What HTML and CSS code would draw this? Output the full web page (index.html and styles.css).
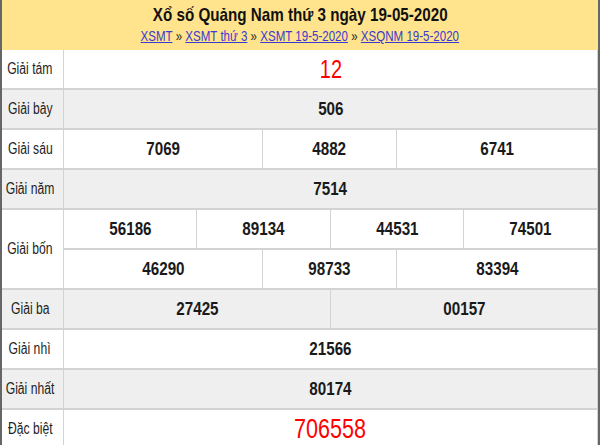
FILE: index.html
```html
<!DOCTYPE html>
<html lang="vi">
<head>
<meta charset="utf-8">
<title>Xổ số Quảng Nam</title>
<link rel="stylesheet" href="styles.css">
</head>
<body>
<div class="board">
  <div class="head">
    <h1 class="title"><span class="sq">Xổ số Quảng Nam thứ 3 ngày 19-05-2020</span></h1>
    <div class="crumbs"><span class="sq sq-link"><a href="#">XSMT</a> » <a href="#">XSMT thứ 3</a> » <a href="#">XSMT 19-5-2020</a> » <a href="#">XSQNM 19-5-2020</a></span></div>
  </div>
  <div class="grid">
    <div class="lbl"><span class="sq sq-lbl">Giải tám</span></div>
    <div class="num red s6"><span class="sq">12</span></div>

    <div class="lbl alt"><span class="sq sq-lbl">Giải bảy</span></div>
    <div class="num alt s6"><span class="sq">506</span></div>

    <div class="lbl"><span class="sq sq-lbl">Giải sáu</span></div>
    <div class="num s2"><span class="sq">7069</span></div>
    <div class="num s2"><span class="sq">4882</span></div>
    <div class="num s2"><span class="sq">6741</span></div>

    <div class="lbl alt"><span class="sq sq-lbl">Giải năm</span></div>
    <div class="num alt s6"><span class="sq">7514</span></div>

    <div class="lbl r2"><span class="sq sq-lbl">Giải bốn</span></div>
    <div class="num s1"><span class="sq">56186</span></div>
    <div class="num s2"><span class="sq">89134</span></div>
    <div class="num s2"><span class="sq">44531</span></div>
    <div class="num s1"><span class="sq">74501</span></div>
    <div class="num s2"><span class="sq">46290</span></div>
    <div class="num s2"><span class="sq">98733</span></div>
    <div class="num s2"><span class="sq">83394</span></div>

    <div class="lbl alt"><span class="sq sq-lbl">Giải ba</span></div>
    <div class="num alt s3"><span class="sq">27425</span></div>
    <div class="num alt s3"><span class="sq">00157</span></div>

    <div class="lbl"><span class="sq sq-lbl">Giải nhì</span></div>
    <div class="num s6"><span class="sq">21566</span></div>

    <div class="lbl alt"><span class="sq sq-lbl">Giải nhất</span></div>
    <div class="num alt s6"><span class="sq">80174</span></div>

    <div class="lbl"><span class="sq sq-lbl">Đặc biệt</span></div>
    <div class="num red big s6"><span class="sq">706558</span></div>
  </div>
</div>
</body>
</html>
```
FILE: styles.css
```css
html, body {
  margin: 0;
  padding: 0;
  background: #ffffff;
}
body {
  width: 600px;
  height: 445px;
  overflow: hidden;
  font-family: "Liberation Sans", Arial, sans-serif;
  color: #1a1a1a;
}
.sq {
  display: inline-block;
  white-space: nowrap;
  transform: scaleX(0.8);
  transform-origin: center;
}
.sq-link {
  transform: scaleX(0.77);
}
.sq-lbl {
  transform: scaleX(0.76);
}
.board {
  border-left: 2px solid #666666;
  border-right: 2px solid #666666;
  width: 596px;
}
.head {
  background: #ffe38d;
  height: 50px;
  display: flex;
  flex-direction: column;
  align-items: center;
  box-sizing: border-box;
  padding-top: 4px;
}
.title {
  margin: 0;
  font-size: 19px;
  font-weight: bold;
  line-height: 22px;
  color: #111;
  white-space: nowrap;
}
.crumbs {
  font-size: 15px;
  line-height: 20px;
  color: #222;
  white-space: nowrap;
}
.crumbs a {
  color: #3a3ad0;
  text-decoration: underline;
}
.grid {
  display: grid;
  grid-template-columns: 61px 132px 65px 67px 65px 66px 133px;
  grid-auto-rows: 38px;
  column-gap: 1px;
  row-gap: 2px;
  background: #d3d3d3;
  padding-right: 1px;
}
.grid > div {
  background: #ffffff;
  display: flex;
  align-items: center;
}
.grid > .alt {
  background: #efefef;
}
.lbl {
  grid-column: 1;
  justify-content: center;
  padding-right: 5px;
  font-size: 16px;
  color: #1e1e1e;
}
.r2 { grid-row: span 2; }
.num {
  justify-content: center;
  font-size: 19px;
  font-weight: bold;
  color: #1a1a1a;
}
.red {
  color: #ff0000;
  font-weight: normal;
  font-size: 25px;
}
.big { font-size: 27px; }
.s1 { grid-column: span 1; }
.s2 { grid-column: span 2; }
.s3 { grid-column: span 3; }
.s6 { grid-column: span 6; }
```
